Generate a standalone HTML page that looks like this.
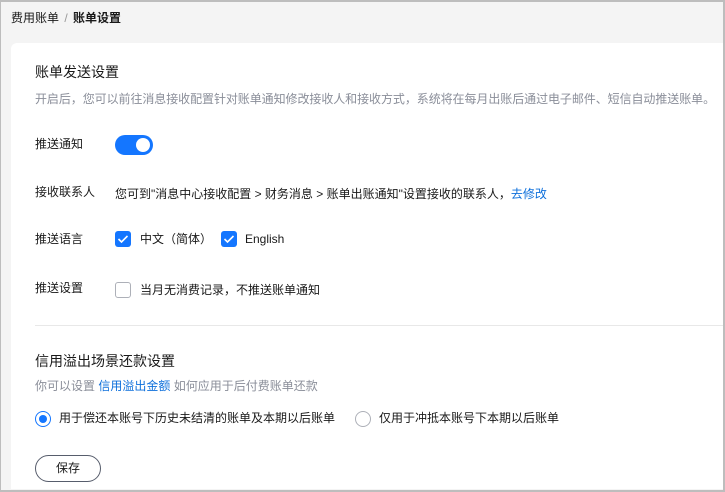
<!DOCTYPE html><html><head><meta charset="utf-8"><style>
*{margin:0;padding:0;box-sizing:border-box}
body{width:725px;height:492px;overflow:hidden;background:#f4f4f4;font-family:"Liberation Sans","Noto Sans CJK SC",sans-serif;color:#191919;position:relative;font-size:12px}
.frame{position:absolute;left:0;top:0;width:725px;height:492px;border:2px solid #bdbdbd;border-left:1px solid #bdbdbd;pointer-events:none}
.a{position:absolute;white-space:nowrap;line-height:16px}
.card{position:absolute;left:11px;top:43px;width:712px;height:446px;background:#fff;border-radius:6px 0 0 0}
.g{color:#8a8e99}.b{color:#0d6fdb}
.cb{position:absolute;width:16px;height:16px;border-radius:3px;background:#1476ff}
.cb svg{position:absolute;left:2px;top:3px}
.ucb{position:absolute;width:16px;height:16px;border-radius:3px;border:1px solid #adb0b8;background:#fff}
</style></head><body>
<div class="a" style="left:11px;top:10px;font-size:12px">费用账单 <span style="color:#999;margin:0 2px">/</span> <b style="font-weight:600">账单设置</b></div>
<div class="card"></div>
<div class="a" style="left:35px;top:64px;font-size:14px">账单发送设置</div>
<div class="a g" style="left:35px;top:91px;letter-spacing:-0.07px">开启后，您可以前往消息接收配置针对账单通知修改接收人和接收方式，系统将在每月出账后通过电子邮件、短信自动推送账单。</div>
<div class="a" style="left:35px;top:136px">推送通知</div>
<div style="position:absolute;left:115px;top:135px;width:38px;height:20px;border-radius:10px;background:#1476ff"><div style="position:absolute;right:3px;top:3px;width:14px;height:14px;border-radius:50%;background:#fff"></div></div>
<div class="a" style="left:35px;top:184px">接收联系人</div>
<div class="a" style="left:115px;top:186px">您可到"消息中心接收配置 &gt; 财务消息 &gt; 账单出账通知"设置接收的联系人，<span class="b">去修改</span></div>
<div class="a" style="left:35px;top:231px">推送语言</div>
<div class="cb" style="left:115px;top:231px"><svg width="12" height="10"><path d="M1.5 5l3 3 6-6" stroke="#fff" stroke-width="1.6" fill="none"/></svg></div>
<div class="a" style="left:140px;top:231px">中文（简体）</div>
<div class="cb" style="left:221px;top:231px"><svg width="12" height="10"><path d="M1.5 5l3 3 6-6" stroke="#fff" stroke-width="1.6" fill="none"/></svg></div>
<div class="a" style="left:245px;top:231px">English</div>
<div class="a" style="left:35px;top:280px">推送设置</div>
<div class="ucb" style="left:115px;top:282px"></div>
<div class="a" style="left:140px;top:282px">当月无消费记录，不推送账单通知</div>
<div style="position:absolute;left:35px;top:325px;width:688px;height:1px;background:#e8e8e8"></div>
<div class="a" style="left:35px;top:353px;font-size:14px">信用溢出场景还款设置</div>
<div class="a g" style="left:35px;top:378px">你可以设置 <span class="b">信用溢出金额</span> 如何应用于后付费账单还款</div>
<div style="position:absolute;left:35px;top:411px;width:16px;height:16px;border-radius:50%;border:1px solid #1476ff"><div style="position:absolute;left:3px;top:3px;width:8px;height:8px;border-radius:50%;background:#1476ff"></div></div>
<div class="a" style="left:59px;top:410px">用于偿还本账号下历史未结清的账单及本期以后账单</div>
<div style="position:absolute;left:355px;top:411px;width:16px;height:16px;border-radius:50%;border:1px solid #adb0b8"></div>
<div class="a" style="left:379px;top:410px">仅用于冲抵本账号下本期以后账单</div>
<div style="position:absolute;left:35px;top:455px;width:66px;height:27px;border:1px solid #575d6c;border-radius:14px;text-align:center;line-height:25px">保存</div>
<div class="frame"></div>
</body></html>
